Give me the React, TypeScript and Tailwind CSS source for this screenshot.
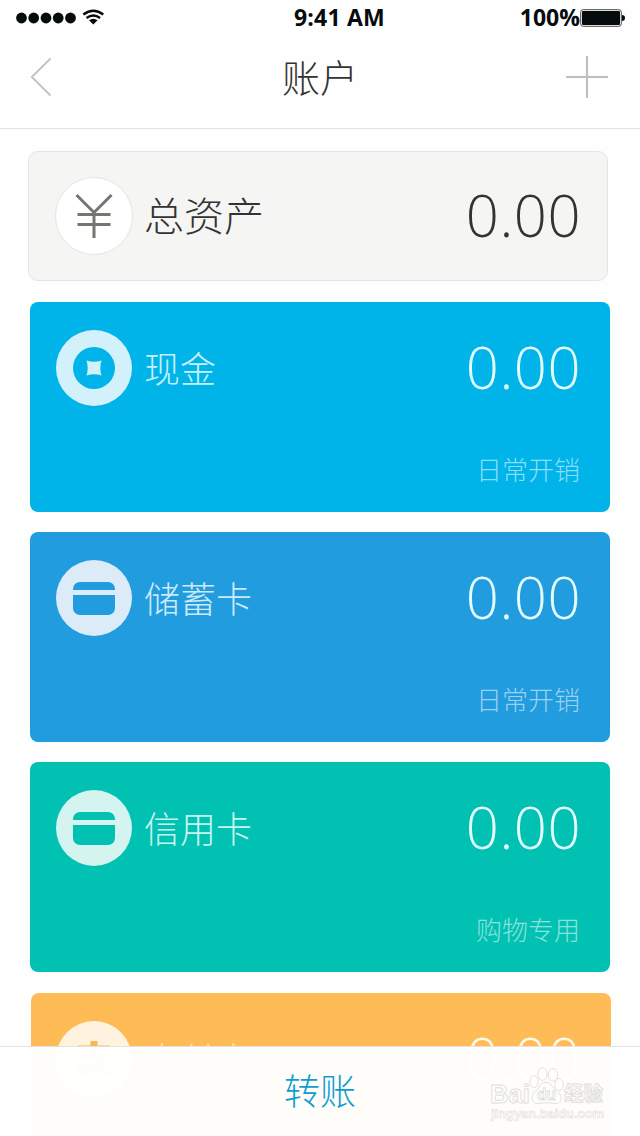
import type { ReactNode } from 'react'

type Account = {
  name: string
  amount: string
  note: string
  card: string
  circle: string
  label: string
  noteColor: string
  icon: ReactNode
}

const BankCard = ({ className }: { className: string }) => (
  <svg viewBox="0 0 76 76" className={`h-[76px] w-[76px] ${className}`} fill="currentColor">
    <path d="M17 30v-1a7 7 0 0 1 7-7h28a7 7 0 0 1 7 7v1z" />
    <path d="M17 35h42v13a7 7 0 0 1-7 7H24a7 7 0 0 1-7-7z" />
  </svg>
)

const Coin = () => (
  <svg viewBox="0 0 76 76" className="h-[76px] w-[76px]">
    <circle cx="38" cy="38" r="21" fill="#00b4e9" />
    <path d="M30.5 30.5q7.5 2.4 15 0q-2.4 7.5 0 15q-7.5-2.4-15 0q2.4-7.5 0-15z" fill="#d2f1fb" />
  </svg>
)

const Alipay = () => (
  <svg viewBox="0 0 76 76" className="h-[76px] w-[76px]" fill="none" stroke="#f5b955" strokeWidth="5">
    <path d="M22 26.5h32" strokeWidth="4" />
    <path d="M38 20v14" strokeWidth="7" />
    <path d="M24 36h24q-6 14-19 16q-8 0-7-5q5-5 14-2l21 9" strokeWidth="4" />
  </svg>
)

const accounts: Account[] = [
  { name: '现金', amount: '0.00', note: '日常开销', card: 'bg-[#00b4e9]', circle: 'bg-[#d2f1fb]', label: 'text-[#c5f0fb]', noteColor: 'text-[#8adef7]', icon: <Coin /> },
  { name: '储蓄卡', amount: '0.00', note: '日常开销', card: 'bg-[#219cde]', circle: 'bg-[#dcebf8]', label: 'text-[#cdeafa]', noteColor: 'text-[#9dd1f2]', icon: <BankCard className="text-[#219cde]" /> },
  { name: '信用卡', amount: '0.00', note: '购物专用', card: 'bg-[#01c1b2]', circle: 'bg-[#d3f4ef]', label: 'text-[#c8f5ee]', noteColor: 'text-[#8be2da]', icon: <BankCard className="text-[#01c1b2]" /> },
]

const StatusBar = () => (
  <div className="flex h-9 items-center pr-[15px] pl-4 font-['Open_Sans',sans-serif] text-[23px] font-bold text-[#060b0e]">
    <svg viewBox="0 0 90 20" className="h-5 w-[90px]" fill="currentColor">
      <circle cx="5.5" cy="10" r="5.4" />
      <circle cx="17.7" cy="10" r="5.4" />
      <circle cx="30" cy="10" r="5.4" />
      <circle cx="42.2" cy="10" r="5.4" />
      <circle cx="54.5" cy="10" r="5.4" />
      <path d="M67.300 6.500q10-7.500 20 0M70.500 10q6.800-5 13.600 0" fill="none" stroke="currentColor" strokeWidth="2.2" />
      <path d="M73 12.300q4.300-3 8.600 0l-4.300 4.200z" />
    </svg>
    <span className="-mt-0.5 ml-[188px] tracking-[0.2px]">9:41 AM</span>
    <span className="-mt-0.5 ml-auto">100%</span>
    <svg viewBox="0 0 45 18" className="h-[18px] w-[45px]">
      <rect x="0.7" y="0.7" width="40.6" height="16.6" rx="2.5" fill="#fff" stroke="#49494b" />
      <rect x="2" y="2" width="38" height="14" rx="1" fill="#060b0e" />
      <path d="M42 6q3 0 3 3t-3 3z" fill="#060b0e" />
    </svg>
  </div>
)

const Header = () => (
  <div className="flex h-[93px] items-start justify-between border-b border-[#e2e2e2] pr-8 pl-[30px]">
    <svg viewBox="0 0 42 42" className="mt-5 h-[42px] w-[42px]" fill="none" stroke="#c5c1bd" strokeWidth="1.8">
      <path d="M20.5 2.5L1.8 21l18.7 18.5" />
    </svg>
    <h1 className="mt-[13px] pl-0.5 text-[38px] leading-[54px] text-[#333]">账户</h1>
    <svg viewBox="0 0 42 42" className="mt-5 h-[42px] w-[42px]" stroke="#bfbfb9" strokeWidth="2">
      <path d="M0 21h42M21 0v42" />
    </svg>
  </div>
)

const Amount = ({ children }: { children: ReactNode }) => (
  <span className="-mt-0.5 ml-auto font-['Open_Sans',sans-serif] text-[58px] leading-[76px] tracking-[0.5px]">{children}</span>
)

const Watermark = () => (
  <svg viewBox="0 0 124 60" className="absolute right-[30px] bottom-[10px] h-[60px] w-[124px]" fill="#fffefb" stroke="#dedddb" strokeWidth="0.9">
    <text x="4" y="37" fontSize="26" fontWeight="700" fontFamily="Liberation Sans, sans-serif" textLength="40" lengthAdjust="spacingAndGlyphs">Bai</text>
    <ellipse cx="48" cy="15.5" rx="4.2" ry="6" />
    <ellipse cx="56.5" cy="8" rx="4.6" ry="6.3" />
    <ellipse cx="67" cy="9" rx="4.6" ry="6.300" />
    <ellipse cx="73" cy="18.500" rx="4.200" ry="6" />
    <path d="M55 18q5-4 10 1q3 5 8 8q5 7-1 10.500q-11-1.500-22 0q-7-4-2-11q5-3 7-8.500z" />
    <text x="51" y="34" fontSize="17" fontWeight="700" fontFamily="Liberation Sans, sans-serif" textLength="19" lengthAdjust="spacingAndGlyphs">du</text>
    <text x="78" y="35" fontSize="20" fontWeight="700" fontFamily="Noto Sans CJK SC, sans-serif" textLength="39" lengthAdjust="spacingAndGlyphs">经验</text>
    <text x="5" y="52" fontSize="13" fontWeight="700" fontFamily="Liberation Sans, sans-serif" textLength="113" lengthAdjust="spacingAndGlyphs" strokeWidth="0.600">jingyan.baidu.com</text>
  </svg>
)

const App = () => {
  return (
    <div className="relative h-[1136px] w-[640px] overflow-hidden bg-[#fefefe] font-['Noto_Sans_CJK_SC',sans-serif] font-light">
      <StatusBar />
      <Header />

      <div className="mt-[22px] ml-7 flex h-[130px] w-[580px] items-center rounded-[10px] border border-[#e4e4e2] bg-[#f5f5f3] px-[26px] text-[#333]">
        <div className="h-[78px] w-[78px] rounded-full border border-[#e6e5e2] bg-white">
          <svg viewBox="0 0 76 76" className="h-[76px] w-[76px]" fill="none" stroke="#76756f" strokeWidth="3">
            <path d="M20.5 17L38 34.5L55.5 17M38 34v26M21.5 36.5h33M21.5 46.5h33" />
          </svg>
        </div>
        <span className="-mt-[5px] ml-[11px] text-[40px] leading-[60px]">总资产</span>
        <Amount>0.00</Amount>
      </div>

      <div className="mt-[21px] ml-[30px] flex w-[580px] flex-col gap-5">
        {accounts.map((a) => (
          <div key={a.name} className={`h-[210px] rounded-lg pt-7 pr-[29px] pl-[26px] ${a.card}`}>
            <div className="flex h-[76px] items-center">
              <div className={`h-[76px] w-[76px] rounded-full ${a.circle}`}>{a.icon}</div>
              <span className={`-mt-[3px] ml-3 text-4xl leading-[54px] ${a.label}`}>{a.name}</span>
              <span className="ml-auto flex text-[#e3fcff]">
                <Amount>{a.amount}</Amount>
              </span>
            </div>
            <div className={`mt-[43px] pr-px text-right text-[26px] leading-[40px] ${a.noteColor}`}>{a.note}</div>
          </div>
        ))}
      </div>

      <div className="mt-[21px] ml-[31px] h-[210px] w-[580px] rounded-lg bg-[#ffbc56] pt-7 pr-[30px] pl-[25px]">
        <div className="flex h-[76px] items-center">
          <div className="h-[76px] w-[76px] rounded-full bg-[#fff2df]">
            <Alipay />
          </div>
          <span className="-mt-[3px] ml-3 text-4xl leading-[54px] text-[#ffe3b8]">支付宝</span>
          <span className="ml-auto flex text-[#fffbe8]">
            <Amount>0.00</Amount>
          </span>
        </div>
      </div>

      <div className="absolute bottom-0 left-0 flex h-[90px] w-full items-center justify-center border-t border-[#e2e2e0] bg-white/97 pb-1.5 text-4xl text-[#0c9ed0]">
        转账
        <Watermark />
      </div>
    </div>
  )
}

export default App
